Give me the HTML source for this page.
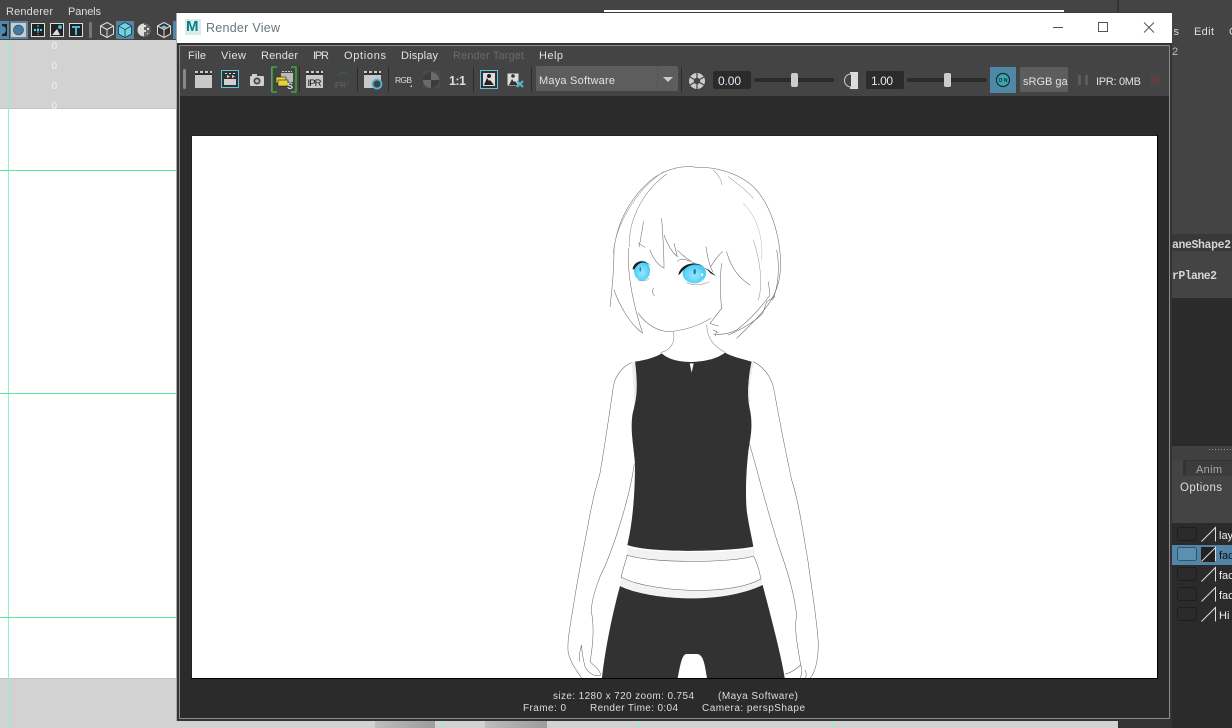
<!DOCTYPE html>
<html>
<head>
<meta charset="utf-8">
<style>
html,body{margin:0;padding:0;width:1232px;height:728px;overflow:hidden;background:#444}
svg{display:block;position:absolute;left:0;top:0}
text{font-family:"Liberation Sans",sans-serif}
</style>
</head>
<body>
<svg width="1232" height="728" viewBox="0 0 1232 728" xmlns="http://www.w3.org/2000/svg">
<defs>
<radialGradient id="eye" cx="50%" cy="58%" r="55%"><stop offset="0" stop-color="#9ae8ff"/><stop offset=".7" stop-color="#5cd3fa"/><stop offset="1" stop-color="#3cc2f2"/></radialGradient>
<linearGradient id="bot" x1="0" x2="1" y1="0" y2="0"><stop offset="0" stop-color="#bdbdbd"/><stop offset="1" stop-color="#9c9c9c"/></linearGradient>
<filter id="soft" filterUnits="userSpaceOnUse" x="192" y="136" width="965" height="560"><feGaussianBlur stdDeviation=".35"/></filter>
<g id="clap"><rect x="0" y="0" width="17" height="5" fill="#333"/><path d="M0 0h3v2H0zM5 0h3v2H5zM10 0h3v2h-3zM15 0h2v2h-2z" fill="#ccc"/><rect x="0" y="4" width="17" height="13" fill="#c8c8c8"/></g>
</defs>

<!-- Main app background -->
<rect width="1232" height="728" fill="#444"/>
<rect x="0" y="40" width="177" height="68" fill="#d2d2d2"/>
<rect x="0" y="108" width="177" height="1" fill="#c4c4c4"/>
<rect x="0" y="109" width="177" height="569" fill="#fff"/>
<rect x="0" y="678" width="1118" height="50" fill="#d2d2d2"/>
<rect x="0" y="678" width="177" height="1" fill="#c4c4c4"/>
<rect x="8" y="40" width="1" height="688" fill="#8ff5bd"/>
<rect x="0" y="170" width="177" height="1" fill="#5fe8a0"/>
<rect x="0" y="393" width="177" height="1" fill="#5fe8a0"/>
<rect x="0" y="617" width="177" height="1" fill="#5fe8a0"/>
<text x="6" y="15" font-size="11" fill="#ddd" textLength="47">Renderer</text>
<text x="68" y="15" font-size="11" fill="#ddd" textLength="33">Panels</text>
<g fill="#f2f2f2" font-size="10"><text x="51.500" y="49">0</text><text x="51.500" y="69">0</text><text x="51.500" y="89">0</text><text x="51.500" y="109">0</text></g>

<!-- Main toolbar icons -->
<rect x="0" y="21" width="9" height="18" fill="#5285a6"/>
<rect x="2" y="24" width="5" height="12" fill="#222"/>
<circle cx="2" cy="30" r="4" fill="#4d87ad"/>
<rect x="10" y="21" width="18" height="18" fill="#5285a6"/>
<rect x="11" y="23" width="15" height="14" fill="#ccc"/>
<circle cx="18.500" cy="30" r="5" fill="#3f7ca6" stroke="#333" stroke-width=".6"/>
<rect x="31.500" y="23.500" width="13" height="13" fill="#222" stroke="#ddd"/>
<path d="M34 30h9" stroke="#4fd2e8" stroke-width="2" stroke-dasharray="2 1"/><path d="M38 25v10" stroke="#4fd2e8" stroke-dasharray="2 1"/>
<rect x="50.500" y="23.500" width="13" height="13" fill="#222" stroke="#ddd"/>
<path d="M52 35l5-6 3 6z" fill="#ddd"/><circle cx="60" cy="27" r="2" fill="#4fb8d8"/>
<rect x="69.500" y="23.500" width="13" height="13" fill="#222" stroke="#ddd"/>
<path d="M72 26h8v2h-3v7h-2v-7h-3z" fill="#4fb8d8"/>
<rect x="89" y="22" width="3" height="16" rx="1.500" fill="#777"/>
<g fill="none" stroke="#ddd" stroke-width="1"><path d="M100.500 26l6.500-3.500 6.500 3.500v8l-6.500 3.500-6.500-3.500zM100.500 26l6.500 3.500 6.500-3.500M107 29.500v8"/></g>
<rect x="116" y="21" width="18" height="18" fill="#5285a6"/>
<path d="M118.500 26l6.500-3.500 6.500 3.500v8l-6.500 3.500-6.500-3.500z" fill="#6cd4e6" stroke="#222" stroke-width=".7"/>
<path d="M118.500 26l6.500 3.500 6.500-3.500M125 29.500v8" fill="none" stroke="#222" stroke-width=".7"/>
<circle cx="144" cy="30" r="6.500" fill="#ddd"/>
<path d="M144 23.500a6.500 6.500 0 0 1 0 13z" fill="#666"/><path d="M144 25h2v2h-2zM147 28h2v2h-2zM144 30h2v2h-2zM147 33h1v1h-1z" fill="#ddd"/>
<path d="M157.500 26l6.500-3.500 6.500 3.500v8l-6.500 3.500-6.500-3.500z" fill="#333" stroke="#ddd"/>
<path d="M157.500 26l6.500 3.500 6.500-3.500M164 29.500v8" fill="none" stroke="#ddd"/><path d="M161 27l3-1.500 3 1.500-3 1.500z" fill="#6cd4e6"/>
<rect x="173" y="21" width="4" height="18" fill="#5285a6"/>

<!-- Right side panel -->
<rect x="1117" y="0" width="2" height="13" fill="#333"/>
<text x="1170" y="35" font-size="11" fill="#ddd" textLength="9">ls</text>
<text x="1194" y="35" font-size="11" fill="#ddd" textLength="20">Edit</text>
<text x="1229" y="35" font-size="11" fill="#ddd">C</text>
<text x="1172" y="55" font-size="11" fill="#bbb">2</text>
<rect x="1172" y="234" width="60" height="17" fill="#383838"/>
<text x="1172" y="248" font-size="11.500" font-weight="700" fill="#d4d4d4" style="font-family:'Liberation Mono',monospace" textLength="59">aneShape2</text>
<text x="1172" y="279" font-size="11.500" font-weight="700" fill="#d4d4d4" style="font-family:'Liberation Mono',monospace" textLength="45">rPlane2</text>
<rect x="1172" y="298" width="60" height="148" fill="#2b2b2b"/>
<rect x="1172" y="446" width="60" height="14" fill="#404040"/>
<path d="M1209 449.500h23" stroke="#999" stroke-dasharray="1 2"/>
<rect x="1172" y="460" width="60" height="16" fill="#333"/>
<rect x="1172" y="460" width="11" height="16" fill="#444"/>
<rect x="1186" y="461" width="46" height="15" fill="#3c3c3c"/>
<text x="1196" y="473" font-size="11" fill="#aaa" textLength="26">Anim</text>
<rect x="1172" y="476" width="60" height="47" fill="#444"/>
<text x="1180" y="491" font-size="11.500" fill="#ddd" textLength="42">Options</text>
<rect x="1172" y="523" width="60" height="205" fill="#2b2b2b"/>
<rect x="1172" y="545" width="60" height="20" fill="#5285a6"/>
<g fill="none" stroke="#1e1e1e">
<rect x="1177.500" y="527.500" width="19" height="13" rx="2"/>
<rect x="1177.500" y="547.500" width="19" height="13" rx="2" fill="#5b90b2" stroke="#2c5570"/>
<rect x="1177.500" y="567.500" width="19" height="13" rx="2"/>
<rect x="1177.500" y="587.500" width="19" height="13" rx="2"/>
<rect x="1177.500" y="607.500" width="19" height="13" rx="2"/>
</g>
<rect x="1201" y="547" width="15" height="15" fill="#222"/>
<g stroke="#ddd" fill="none"><path d="M1201.500 541.500l14-14v14"/><path d="M1201.500 561.500l14-14v14"/><path d="M1201.500 581.500l14-14v14"/><path d="M1201.500 601.500l14-14v14"/><path d="M1201.500 621.500l14-14v14"/></g>
<g font-size="11" fill="#eee"><text x="1219" y="539">lay</text><text x="1219" y="559" fill="#111">fac</text><text x="1219" y="579">fac</text><text x="1219" y="599">fac</text><text x="1219" y="619">Hi</text></g>

<!-- Bottom strip shapes -->
<rect x="375" y="721" width="60" height="7" fill="url(#bot)"/>
<rect x="485" y="721" width="62" height="7" fill="url(#bot)"/>
<rect x="443" y="721" width="1" height="7" fill="#8ff5bd"/>
<rect x="638" y="721" width="1" height="7" fill="#8ff5bd"/>
<rect x="832" y="721" width="1" height="7" fill="#8ff5bd"/>
<rect x="1118" y="721" width="114" height="7" fill="#333"/>
<rect x="1172" y="721" width="60" height="7" fill="#2b2b2b"/>

<!-- Hidden window edge -->
<rect x="604" y="10" width="460" height="2" fill="#fff"/>
<rect x="604" y="12" width="460" height="1" fill="#333"/>

<!-- Render window -->
<rect x="176" y="12" width="996" height="709" fill="#3a3a3a"/>
<rect x="177" y="13" width="995" height="30" fill="#fff"/>
<rect x="176" y="13" width="1" height="708" fill="#aaa"/>
<rect x="177" y="43" width="995" height="678" fill="#333"/>
<rect x="179" y="45" width="991" height="674" fill="#8a8a8a"/>
<rect x="180" y="46" width="989" height="672" fill="#2b2b2b"/>
<rect x="180" y="46" width="989" height="50" fill="#444"/>

<!-- Title bar -->
<rect x="185" y="19" width="16" height="16" fill="#d8ecec"/>
<text x="186" y="31" font-size="15" font-weight="700" fill="#0a7f86" textLength="14">M</text>
<text x="206" y="32" font-size="12.500" fill="#68757c" textLength="74">Render View</text>
<path d="M1053 27.500h10" stroke="#555"/>
<rect x="1098.500" y="22.500" width="9" height="9" fill="none" stroke="#555"/>
<path d="M1144 22.500l10 10M1154 22.500l-10 10" stroke="#555"/>

<!-- Menu -->
<g font-size="11" fill="#e2e2e2">
<text x="188" y="59" textLength="18">File</text>
<text x="221" y="59" textLength="25">View</text>
<text x="261" y="59" textLength="37">Render</text>
<text x="313" y="59" textLength="16">IPR</text>
<text x="344" y="59" textLength="42">Options</text>
<text x="401" y="59" textLength="37">Display</text>
<text x="453" y="59" textLength="71" fill="#6a6a6a">Render Target</text>
<text x="539" y="59" textLength="24">Help</text>
</g>

<!-- Render toolbar -->
<rect x="183" y="69" width="3" height="20" rx="1.500" fill="#888"/>
<use href="#clap" x="195" y="71"/>
<rect x="221.500" y="70.500" width="17" height="17" fill="#333" stroke="#5ac8e0"/>
<path d="M225 73h2v1h-2zM229 73h2v1h-2zM233 73h2v1h-2z" fill="#ddd"/>
<path d="M227 75l3 1.500-3 1.500zM232 75l3 1.500-3 1.500z" fill="#ddd"/><rect x="224" y="79" width="12" height="6" fill="#cfcfcf"/>
<rect x="250" y="76" width="14" height="10" rx="1" fill="#cfcfcf"/><rect x="252" y="74" width="5" height="2" fill="#cfcfcf"/><circle cx="257" cy="81" r="3.500" fill="#444"/><circle cx="257" cy="81" r="1.800" fill="#bbb"/>
<rect x="271" y="67" width="1" height="25" fill="#a63fb8"/>
<path d="M277 67h-5v25h5M291 67h5v25h-5" fill="none" stroke="#2ee02e" stroke-width="1"/>
<rect x="281" y="73" width="12" height="9" fill="#bbb"/><path d="M282 71.500h10" stroke="#ccc" stroke-dasharray="2 1"/>
<rect x="276" y="77" width="10" height="6" fill="#e6d23c" stroke="#222" stroke-width=".6"/><rect x="278" y="80" width="10" height="6" fill="#e6d23c" stroke="#222" stroke-width=".6"/>
<text x="287" y="89" font-size="9" font-weight="700" fill="#ddd">S</text>
<rect x="299" y="67" width="1" height="25" fill="#2b2b2b"/>
<use href="#clap" x="306" y="71"/>
<text x="307.500" y="86" font-size="9.500" fill="#111" textLength="14">IPR</text>
<path d="M338 76a6 6 0 0 1 10-1M349 80a6 6 0 0 1-9 4" fill="none" stroke="#3e5458" stroke-width="1.800"/>
<text x="334" y="88" font-size="8" fill="#5c5c5c" textLength="12">IPR</text>
<rect x="357" y="67" width="1" height="25" fill="#2b2b2b"/>
<use href="#clap" x="364" y="71"/>
<circle cx="377" cy="84" r="4.500" fill="#444" stroke="#4fb8d8" stroke-width="1.800"/>
<rect x="388" y="67" width="1" height="25" fill="#2b2b2b"/>
<text x="395" y="83" font-size="8.500" fill="#ddd" textLength="17">RGB</text>
<path d="M410 87h2v-2z" fill="#ddd"/>
<rect x="423" y="71" width="17" height="17" fill="#4a4a4a"/>
<circle cx="431" cy="80" r="8" fill="#6a6a6a"/><path d="M431 72v8h-8a8 8 0 0 1 8-8zM431 80h8a8 8 0 0 1-8 8z" fill="#3c3c3c"/>
<text x="449" y="85" font-size="12.500" font-weight="700" fill="#ddd" textLength="17">1:1</text>
<rect x="473" y="67" width="1" height="25" fill="#2b2b2b"/>
<rect x="480.500" y="70.500" width="17" height="18" fill="#333" stroke="#5ac8e0"/>
<rect x="483" y="73" width="12" height="13" fill="#ddd"/><path d="M484 85l3-7 2 3 1-1 4 5z" fill="#222"/><circle cx="489" cy="76" r="2" fill="#222"/>
<rect x="507.500" y="73.500" width="11" height="12" fill="#ddd"/><path d="M509 85l3-6 2 3 1-1 3 4z" fill="#333"/><circle cx="513" cy="76" r="1.800" fill="#333"/>
<path d="M517 81l6 6M523 81l-6 6" stroke="#4fb8c8" stroke-width="2"/>
<rect x="531" y="67" width="1" height="25" fill="#2b2b2b"/>
<rect x="536" y="66" width="142" height="25" rx="2" fill="#5d5d5d"/>
<rect x="657" y="66" width="1" height="25" fill="#555"/>
<path d="M663 77h10l-5 5z" fill="#ccc"/>
<text x="539" y="84" font-size="11" fill="#e2e2e2" textLength="76">Maya Software</text>
<rect x="681" y="67" width="1" height="25" fill="#2b2b2b"/>
<circle cx="697" cy="81" r="8" fill="#ccc"/><path d="M697 73v8M690 77l7 4M690 85l7-4M697 89v-8M704 85l-7-4M704 77l-7 4" stroke="#444" stroke-width="1.200"/><circle cx="697" cy="81" r="3.200" fill="#444"/>
<rect x="713" y="71" width="38" height="18" rx="2" fill="#2b2b2b"/>
<text x="718" y="85" font-size="12" fill="#dfe8f5" textLength="23">0.00</text>
<rect x="754" y="78" width="80" height="4" rx="2" fill="#2b2b2b"/>
<rect x="791" y="73" width="7" height="14" rx="2" fill="#ccc"/>
<rect x="850" y="72" width="8" height="17" fill="#ddd"/><circle cx="851" cy="80.500" r="6.500" fill="#444" stroke="#ccc"/><path d="M851 74a6.500 6.500 0 0 1 0 13z" fill="#ddd"/>
<rect x="866" y="71" width="38" height="18" rx="2" fill="#2b2b2b"/>
<text x="871" y="85" font-size="12" fill="#e6e6e6" textLength="22">1.00</text>
<rect x="907" y="78" width="80" height="4" rx="2" fill="#2b2b2b"/>
<rect x="944" y="73" width="7" height="14" rx="2" fill="#ccc"/>
<rect x="990" y="67" width="26" height="26" fill="#4f87a8"/>
<circle cx="1003" cy="80" r="6.500" fill="#36a9b0" stroke="#1d2a30" stroke-width="1.200"/>
<text x="998.500" y="82" font-size="5" font-weight="700" fill="#12262b" textLength="9">ON</text>
<rect x="1020" y="67" width="48" height="25" fill="#5d5d5d"/>
<svg x="1020" y="67" width="48" height="25"><text x="3" y="18" font-size="11" fill="#e2e2e2">sRGB gamma</text></svg>
<path d="M1078 75h3v10h-3zM1085 75h3v10h-3z" fill="#5c5c5c"/>
<text x="1096" y="85" font-size="11" fill="#e2e2e2" textLength="45">IPR: 0MB</text>
<rect x="1150" y="75" width="10" height="10" fill="#5c4040"/>

<!-- Image plate -->
<rect x="191" y="135" width="967" height="544" fill="#000"/>
<rect x="191" y="135" width="966" height="1" fill="#222"/>
<rect x="191" y="135" width="1" height="543" fill="#222"/>
<rect x="192" y="136" width="965" height="542" fill="#fff"/>

<svg x="192" y="136" width="965" height="542" viewBox="192 136 965 542">
<g filter="url(#soft)">
<!-- Body -->
<g transform="translate(550 350) scale(.33333)">
<path d="M255 35C290 30 320 20 335 10C360 32 395 35 425 36C460 35 500 28 525 8C545 20 580 28 605 35C595 80 590 140 600 180C610 230 600 270 597 290C590 340 585 420 590 480C595 520 605 560 610 590C540 605 300 610 232 585C245 530 255 450 255 340C250 280 240 240 248 190C260 150 262 90 255 35Z" fill="#303030"/>
<path d="M419 40L431 40L425 68Z" fill="#fff"/>
<path d="M245 38L255 35C262 90 262 130 255 160C250 130 250 80 245 38ZM605 35L612 38C600 80 596 130 600 175C590 140 595 80 605 35Z" fill="#ececec"/>
<path d="M232 592C300 610 540 612 615 594L612 618C540 640 300 640 230 615Z" fill="#f2f2f2"/>
<path d="M215 680C280 720 530 745 635 685L637 703C560 745 420 760 330 745C290 738 240 725 210 705Z" fill="#f2f2f2"/>
<path d="M210 708C280 745 500 770 638 705C660 790 695 920 705 990L472 990C465 950 462 912 440 912L410 912C395 912 390 950 382 990L155 990C165 900 185 800 210 708Z" fill="#303030"/>
<g fill="none" stroke="#666" stroke-width="1.600">
<path d="M230 615C300 640 540 640 612 618M215 682C280 720 530 745 635 686"/>
<path d="M245 38C215 50 195 80 190 110C180 180 165 280 150 370C135 420 125 460 115 520C100 600 80 700 70 770C60 830 50 880 55 910C65 945 80 960 95 985"/>
<path d="M253 340C240 440 190 600 150 680C130 730 122 770 125 790C132 830 130 880 120 935C135 950 150 960 152 975C130 985 110 960 105 950C100 930 95 900 95 885C90 905 85 915 90 935"/>
<path d="M610 35C640 50 665 80 672 120C690 220 710 320 725 390C745 450 760 550 775 640C785 720 800 800 805 880C805 930 795 970 780 985"/>
<path d="M598 280C625 370 650 480 690 600C715 670 735 740 740 800C730 830 745 900 752 945C735 960 720 970 705 972M752 945C758 960 755 975 750 985M765 960C770 970 770 978 765 985"/>
<path d="M232 615C225 640 215 670 213 685M612 620C625 650 630 670 632 685"/>
</g>
</g>

<!-- Head -->
<g transform="translate(590 150) scale(.33333)" fill="none" stroke="#666" stroke-width="1.600" stroke-linecap="round">
<path d="M72 300C80 220 120 140 190 85C230 55 280 45 320 52C370 50 440 65 490 110C540 160 570 250 572 340C572 390 560 430 530 470C500 510 460 545 440 565"/>
<path d="M70 310C75 240 125 130 220 65" stroke="#999"/>
<path d="M118 290C115 220 150 130 230 72" stroke="#888"/>
<path d="M370 60C385 75 395 90 396 105M415 80C440 100 470 120 490 145" stroke="#999"/>
<path d="M460 160C500 200 520 260 515 330" stroke="#bbb"/>
<path d="M115 295C112 370 125 450 158 550M72 300C72 350 66 420 60 470M72 420C90 470 120 520 155 548"/>
<path d="M160 215C158 240 152 260 148 290M145 280L165 292M180 300C190 330 205 345 222 355M215 205C218 250 222 300 222 355"/>
<path d="M222 255C235 290 250 310 262 320M252 280L262 320M262 300C290 330 320 345 358 362M348 290C352 320 358 345 368 365M362 350C375 330 385 315 398 305"/>
<path d="M395 340C388 390 392 450 395 475M410 305C420 345 440 380 480 405"/>
<path d="M490 270C510 330 520 400 505 450" stroke="#999"/>
<path d="M560 300C570 350 565 410 548 450M535 395L540 435C515 470 480 510 440 540C420 550 395 555 370 552"/>
<path d="M555 440L530 455L518 490C490 520 450 540 415 555M370 540L385 548M380 545L375 558M395 475L360 520L385 528"/>
<path d="M145 490C170 525 205 545 240 545C290 540 330 525 362 505"/>
<path d="M250 545C258 580 240 600 212 608M350 525C352 570 375 590 405 607" stroke="#888"/>
<path d="M190 415C185 425 188 430 193 437"/>
<path d="M290 398C310 408 340 405 358 395M145 390C155 395 170 393 178 385" stroke="#999"/>
</g>
<g transform="translate(590 150) scale(.33333)">
<ellipse cx="156" cy="362" rx="24" ry="30" fill="url(#eye)"/>
<ellipse cx="313" cy="370" rx="35" ry="30" fill="url(#eye)"/>
<ellipse cx="151" cy="358" rx="2.500" ry="7" fill="#3a7d9a"/>
<ellipse cx="314" cy="365" rx="3.500" ry="8" fill="#2f6d90"/>
<circle cx="336" cy="374" r="3.500" fill="#fff"/>
<path d="M128 358C130 335 160 322 186 350C165 330 145 335 133 358Z" fill="#1c1c1c"/>
<path d="M265 375C270 345 310 328 345 352C315 335 290 345 270 372Z" fill="#1c1c1c"/>
<path d="M345 352C355 360 365 365 378 378L362 370Z" fill="#1c1c1c"/>
<path d="M262 335C268 325 285 325 300 335" fill="none" stroke="#555" stroke-width="1.500"/>
</g>
</g>
</svg>

<!-- Status -->
<g font-size="10" fill="#dcdcdc">
<text x="553" y="699" textLength="141">size: 1280 x 720 zoom: 0.754</text>
<text x="718" y="699" textLength="80">(Maya Software)</text>
<text x="523" y="711" textLength="43">Frame: 0</text>
<text x="590" y="711" textLength="88">Render Time: 0:04</text>
<text x="702" y="711" textLength="103">Camera: perspShape</text>
</g>
</svg>
</body>
</html>
